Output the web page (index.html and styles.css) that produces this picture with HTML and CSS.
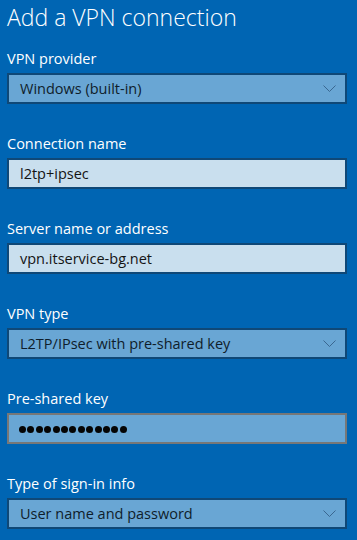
FILE: index.html
```html
<!DOCTYPE html>
<html lang="en">
<head>
<meta charset="UTF-8">
<meta name="viewport" content="width=device-width, initial-scale=1.0">
<title>Add a VPN connection</title>
<link rel="stylesheet" href="styles.css">
</head>
<body>
<div class="vpn-page">
    <div class="vpn-title">Add a VPN connection</div>

    <div class="vpn-field">
        <div class="vpn-label">VPN provider</div>
        <div class="vpn-box vpn-select">
            <span class="vpn-value">Windows (built-in)</span>
            <svg class="vpn-chevron" width="13" height="7" viewBox="0 0 13 7"><path d="M0.5 0.5 L6.5 6.5 L12.5 0.5" fill="none" stroke="#3a6790" stroke-width="1"/></svg>
        </div>
    </div>

    <div class="vpn-field">
        <div class="vpn-label">Connection name</div>
        <div class="vpn-box vpn-text">
            <span class="vpn-value">l2tp+ipsec</span>
        </div>
    </div>

    <div class="vpn-field">
        <div class="vpn-label">Server name or address</div>
        <div class="vpn-box vpn-text">
            <span class="vpn-value">vpn.itservice-bg.net</span>
        </div>
    </div>

    <div class="vpn-field">
        <div class="vpn-label">VPN type</div>
        <div class="vpn-box vpn-select">
            <span class="vpn-value">L2TP/IPsec with pre-shared key</span>
            <svg class="vpn-chevron" width="13" height="7" viewBox="0 0 13 7"><path d="M0.5 0.5 L6.5 6.5 L12.5 0.5" fill="none" stroke="#3a6790" stroke-width="1"/></svg>
        </div>
    </div>

    <div class="vpn-field">
        <div class="vpn-label">Pre-shared key</div>
        <div class="vpn-box vpn-password">
            <span class="vpn-dots">
                <i></i><i></i><i></i><i></i><i></i><i></i><i></i><i></i><i></i><i></i><i></i><i></i><i></i>
            </span>
        </div>
    </div>

    <div class="vpn-field">
        <div class="vpn-label">Type of sign-in info</div>
        <div class="vpn-box vpn-select">
            <span class="vpn-value">User name and password</span>
            <svg class="vpn-chevron" width="13" height="7" viewBox="0 0 13 7"><path d="M0.5 0.5 L6.5 6.5 L12.5 0.5" fill="none" stroke="#3a6790" stroke-width="1"/></svg>
        </div>
    </div>
</div>
</body>
</html>
```

FILE: styles.css
```css
html, body {
    margin: 0;
    height: 100%;
    background-color: #0065b3;
    font-family: "Open Sans", "Noto Sans", sans-serif;
    overflow: hidden;
}

.vpn-page {
    display: flex;
    flex-direction: column;
    padding: 1px 10px 0 7px;
}

.vpn-title {
    font-size: 23px;
    font-weight: 300;
    line-height: 32px;
    color: #ffffff;
    margin-bottom: 16px;
}

.vpn-field {
    display: flex;
    flex-direction: column;
    gap: 4px;
    margin-bottom: 30px;
}

.vpn-label {
    font-size: 14.5px;
    line-height: 20px;
    color: #ffffff;
}

.vpn-box {
    box-sizing: border-box;
    height: 31px;
    display: flex;
    align-items: center;
    justify-content: space-between;
    padding: 0 9px 0 11px;
    border: 2px solid #0f4877;
    font-size: 14.5px;
    line-height: 20px;
}

.vpn-select {
    background-color: #69a6d4;
    color: #0f1d2b;
}

.vpn-text {
    background-color: #c9dfee;
    color: #141414;
}

.vpn-password {
    background-color: #69a6d4;
    border-color: #777777;
    padding-left: 10px;
}

.vpn-value {
    padding-top: 1px;
}

.vpn-chevron {
    display: block;
}

.vpn-dots {
    display: flex;
    gap: 1.4px;
    padding-top: 1px;
}

.vpn-dots i {
    display: block;
    width: 7px;
    height: 7px;
    border-radius: 50%;
    background-color: #050505;
}
```
